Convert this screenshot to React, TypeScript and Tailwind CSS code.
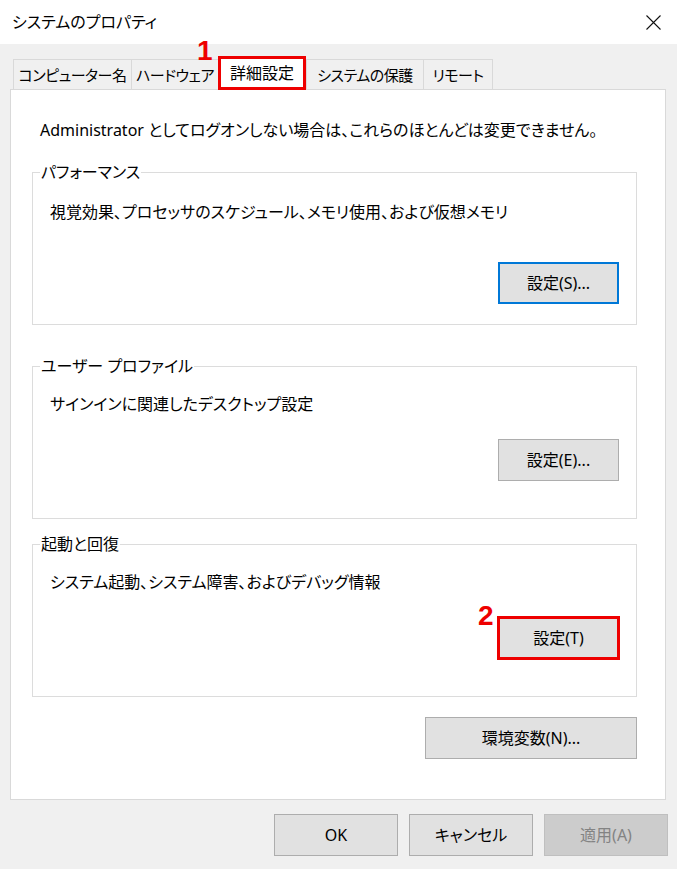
const font = "font-['Noto_Sans','Noto_Sans_CJK_JP',sans-serif] [font-feature-settings:'palt']";

const tabs = [
  { label: "コンピューター名", w: "w-[118px]" },
  { label: "ハードウェア", w: "w-[87px]" },
  { label: "詳細設定", w: "w-[88px]", active: true },
  { label: "システムの保護", w: "w-[117px]" },
  { label: "リモート", w: "w-[70px]", last: true },
];

function Button({
  children,
  className = "",
  variant = "normal",
}: {
  children: React.ReactNode;
  className?: string;
  variant?: "normal" | "default" | "disabled";
}) {
  const look =
    variant === "default"
      ? "border-2 border-[#0078d7] bg-[#e1e1e1] text-black"
      : variant === "disabled"
      ? "border border-[#bfbfbf] bg-[#cccccc] text-[#838383]"
      : "border border-[#adadad] bg-[#e1e1e1] text-black";
  return (
    <button
      className={`h-[42px] flex items-center justify-center text-[16px] leading-[24px] ${look} ${className}`}
    >
      {children}
    </button>
  );
}

function Annotation({ n, className }: { n: string; className: string }) {
  return (
    <span
      className={`absolute font-['Liberation_Sans',sans-serif] font-bold text-[28px] leading-[28px] text-[#ee0000] ${className}`}
    >
      {n}
    </span>
  );
}

function GroupBox({
  title,
  desc,
  className,
  descGap,
  buttonGap,
  bottomGap,
  children,
}: {
  title: string;
  desc: string;
  className: string;
  descGap: string;
  buttonGap: string;
  bottomGap: string;
  children: React.ReactNode;
}) {
  return (
    <fieldset className={`ml-[21px] w-[605px] border border-[#dcdcdc] ${className}`}>
      <legend className="ml-[7px] px-[1px] leading-[24px]">{title}</legend>
      <p className={`pl-[17px] leading-[24px] ${descGap}`}>{desc}</p>
      <div className={`flex justify-end pr-[17px] ${buttonGap} ${bottomGap}`}>{children}</div>
    </fieldset>
  );
}

export default function App() {
  return (
    <div className={`w-[677px] h-[869px] bg-[#f0f0f0] text-[16px] text-black flex flex-col ${font}`}>
      {/* title bar */}
      <div className="h-[44px] bg-white flex items-center justify-between shrink-0">
        <span className="ml-[12px] text-[16px] leading-[24px]">システムのプロパティ</span>
        <svg width="15" height="15" viewBox="0 0 15 15" className="mr-[16px]">
          <path d="M0.5 0.5 L14.5 14.5 M14.5 0.5 L0.5 14.5" stroke="#111" strokeWidth="1.1" fill="none" />
        </svg>
      </div>

      {/* tabs */}
      <div className="ml-[13px] mt-[12px] flex items-end relative z-10">
        {tabs.map((t) =>
          t.active ? (
            <div
              key={t.label}
              className={`${t.w} h-[34px] bg-white relative flex items-center justify-center leading-[24px] whitespace-nowrap`}
            >
              {t.label}
              <span className="absolute inset-0 border-[3px] border-[#ee0000]" />
              <Annotation n="1" className="left-[-21px] top-[-19px]" />
            </div>
          ) : (
            <div
              key={t.label}
              className={`${t.w} h-[30px] mb-px border-t border-l border-[#d9d9d9] ${
                t.last ? "border-r" : ""
              } flex items-center justify-center text-[15px] tracking-[-0.5px] leading-[24px] whitespace-nowrap`}
            >
              {t.label}
            </div>
          )
        )}
      </div>

      {/* panel */}
      <div className="ml-[10px] w-[656px] -mt-px bg-white border border-[#d9d9d9] pt-[28px] pb-[40px]">
        <p className="pl-[29px] leading-[24px]">
          Administrator としてログオンしない場合は、これらのほとんどは変更できません。
        </p>

        <GroupBox
          title="パフォーマンス"
          desc="視覚効果、プロセッサのスケジュール、メモリ使用、および仮想メモリ"
          className="mt-[18px]"
          descGap="mt-[16px]"
          buttonGap="mt-[38px]"
          bottomGap="pb-[20px]"
        >
          <Button variant="default" className="w-[121px]">
            設定(S)...
          </Button>
        </GroupBox>

        <GroupBox
          title="ユーザー プロファイル"
          desc="サインインに関連したデスクトップ設定"
          className="mt-[29px]"
          descGap="mt-[14px]"
          buttonGap="mt-[23px]"
          bottomGap="pb-[37px]"
        >
          <Button className="w-[121px]">設定(E)...</Button>
        </GroupBox>

        <GroupBox
          title="起動と回復"
          desc="システム起動、システム障害、およびデバッグ情報"
          className="mt-[13px]"
          descGap="mt-[14px]"
          buttonGap="mt-[23px]"
          bottomGap="pb-[37px]"
        >
          <div className="relative">
            <Button className="w-[121px]">設定(T)</Button>
            <span className="absolute inset-[-1px] border-[3px] border-[#ee0000]" />
            <Annotation n="2" className="left-[-20px] top-[-15px]" />
          </div>
        </GroupBox>

        <div className="flex justify-end pr-[28px] mt-[20px]">
          <Button className="w-[212px]">環境変数(N)...</Button>
        </div>
      </div>

      {/* footer buttons */}
      <div className="flex justify-end gap-[11px] pr-[9px] mt-[14px]">
        <Button className="w-[124px]">OK</Button>
        <Button className="w-[124px]">キャンセル</Button>
        <Button variant="disabled" className="w-[124px]">
          適用(A)
        </Button>
      </div>
    </div>
  );
}
